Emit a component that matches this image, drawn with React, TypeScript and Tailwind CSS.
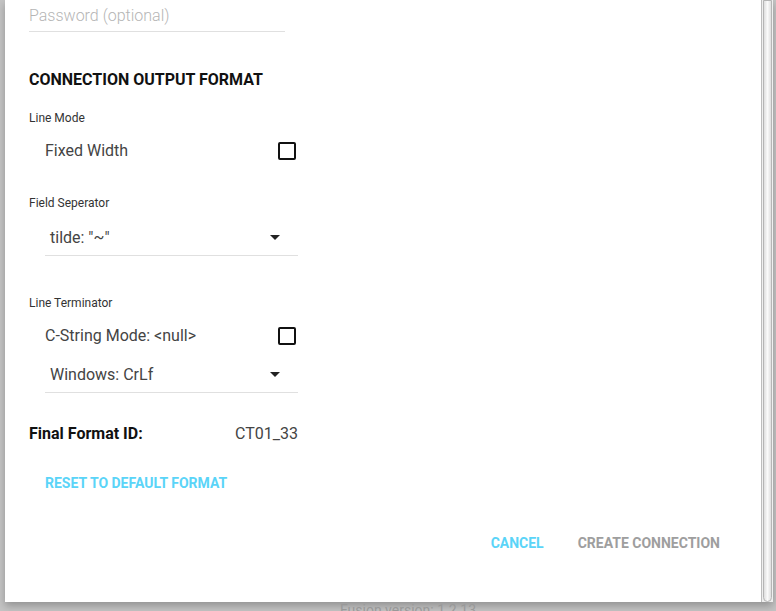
import React from "react";

function Checkbox() {
  return <div className="h-[18px] w-[18px] rounded-[2px] border-2 border-[#111]" />;
}

function Select({ value }: { value: string }) {
  return (
    <div className="ml-[16px] flex h-[36px] w-[253px] items-center justify-between border-b border-[#e0e0e0] pl-[5px] pr-[18px]">
      <span className="text-[16px] text-[#444]">{value}</span>
      <svg width="10" height="5" viewBox="0 0 10 5">
        <path d="M0 0 L10 0 L5 5 Z" fill="#222" />
      </svg>
    </div>
  );
}

function CheckRow({ label }: { label: string }) {
  return (
    <div className="ml-[16px] flex h-[24px] w-[251px] items-center justify-between">
      <span className="text-[16px] text-[#444]">{label}</span>
      <Checkbox />
    </div>
  );
}

export default function App() {
  return (
    <div
      className="relative h-[611px] w-[776px] overflow-hidden bg-[#c4c4c4]"
      style={{ fontFamily: "Roboto, 'Liberation Sans', sans-serif" }}
    >
      <div className="ml-[5px] flex h-[602px] w-[768px] bg-white shadow-[0_4px_8px_rgba(0,0,0,0.25)]">
        {/* content */}
        <div className="flex flex-1 flex-col pl-[24px]">
          <div className="flex h-[32px] w-[256px] items-center border-b border-[#e0e0e0]">
            <span className="text-[16px] font-light text-[#b5b5b5]">Password (optional)</span>
          </div>

          <div className="mt-[38px] h-[20px] text-[16px] font-bold leading-[20px] text-[#111]">
            CONNECTION OUTPUT FORMAT
          </div>

          <div className="mt-[20px] h-[16px] text-[12px] leading-[16px] text-[#333]">Line Mode</div>
          <div className="mt-[13px]">
            <CheckRow label="Fixed Width" />
          </div>

          <div className="mt-[32px] h-[16px] text-[12px] leading-[16px] text-[#333]">Field Seperator</div>
          <div className="mt-[9px]">
            <Select value={'tilde: "~"'} />
          </div>

          <div className="mt-[39px] h-[16px] text-[12px] leading-[16px] text-[#333]">Line Terminator</div>
          <div className="mt-[13px]">
            <CheckRow label="C-String Mode: <null>" />
          </div>
          <div className="mt-[9px]">
            <Select value="Windows: CrLf" />
          </div>

          <div className="mt-[31px] flex h-[20px] w-[269px] items-center justify-between leading-[20px]">
            <span className="text-[16px] font-bold text-[#111]">Final Format ID:</span>
            <span className="text-[16px] text-[#444]">CT01_33</span>
          </div>

          <div className="mt-[29px] ml-[16px] h-[20px] text-[14px] font-bold leading-[20px] text-[#5ad4f8]">
            RESET TO DEFAULT FORMAT
          </div>

          <div className="mt-[40px] flex h-[20px] items-center justify-end gap-[34px] pr-[41px] text-[14px] font-bold leading-[20px]">
            <span className="text-[#5ad4f8]">CANCEL</span>
            <span className="text-[#9e9e9e]">CREATE CONNECTION</span>
          </div>
        </div>

        {/* scrollbar */}
        <div className="flex w-[12px] justify-center border-l border-[#bdbdbd] bg-[#efefef]">
          <div className="mb-[2px] h-full w-[9px] rounded-b-full border border-[#b5b5b5] bg-gradient-to-r from-[#dedede] via-[#fafafa] to-[#dedede]" />
        </div>
      </div>

      <div className="pl-[340px] text-[14px] leading-[16px] text-[#999]">Fusion version: 1.2.13</div>
    </div>
  );
}
